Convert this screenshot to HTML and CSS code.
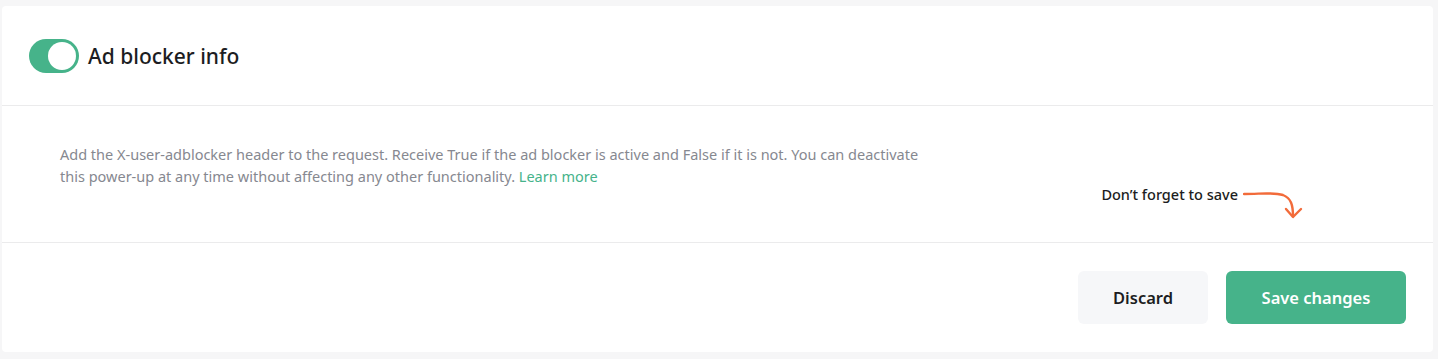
FILE: index.html
```html
<!DOCTYPE html>
<html lang="en">
<head>
<meta charset="utf-8">
<title>Ad blocker info</title>
<link rel="stylesheet" href="styles.css">
</head>
<body>
<div class="card">
  <header class="card-head">
    <span class="toggle" role="switch" aria-checked="true"><span class="knob"></span></span>
    <h2 class="title">Ad blocker info</h2>
  </header>
  <section class="card-body">
    <p class="desc">Add the X-user-adblocker header to the request. Receive True if the ad blocker is active and False if it is not. You can deactivate this power-up at any time without affecting any other functionality. <a class="link" href="#">Learn more</a></p>
    <div class="note">
      <span class="note-text">Don’t forget to save</span>
      <svg class="note-arrow" width="62" height="30" viewBox="0 0 62 30" fill="none" stroke="#f26b3a" stroke-width="2.4" stroke-linecap="round" stroke-linejoin="round">
        <path d="M1 3 C18 3 30 1 40 4 C48 7 50 14 50 25"/>
        <path d="M43 18 L50 26 L58 18"/>
      </svg>
    </div>
  </section>
  <footer class="card-foot">
    <button class="btn btn-ghost" type="button">Discard</button>
    <button class="btn btn-primary" type="button">Save changes</button>
  </footer>
</div>
</body>
</html>
```

FILE: styles.css
```css
html, body {
  margin: 0;
  padding: 0;
}
body {
  background: #f6f6f7;
  font-family: "Noto Sans", "Open Sans", sans-serif;
  color: #1c1d22;
}
.card {
  margin: 6px 5px 7px 2px;
  background: #ffffff;
  border-radius: 4px;
  display: flex;
  flex-direction: column;
}
.card-head {
  height: 100px;
  box-sizing: border-box;
  display: flex;
  align-items: center;
  gap: 9px;
  padding: 1px 0 0 27px;
  border-bottom: 1px solid #ebebec;
}
.toggle {
  width: 50px;
  height: 34px;
  box-sizing: border-box;
  border-radius: 17px;
  background: #46b38a;
  display: flex;
  align-items: center;
  justify-content: flex-end;
  padding: 3px;
}
.knob {
  width: 28px;
  height: 28px;
  border-radius: 50%;
  background: #ffffff;
}
.title {
  margin: 0;
  font-size: 21px;
  font-weight: 500;
  color: #1c1d22;
}
.card-body {
  height: 137px;
  box-sizing: border-box;
  display: flex;
  align-items: flex-end;
  justify-content: space-between;
  padding: 37px 128px 21px 58px;
  border-bottom: 1px solid #ebebec;
}
.desc {
  align-self: flex-start;
  margin: 0;
  width: 880px;
  font-size: 14.5px;
  line-height: 22px;
  color: #868890;
}
.link {
  color: #46b38a;
  text-decoration: none;
}
.note {
  display: flex;
  align-items: flex-start;
  gap: 5px;
}
.note-text {
  font-size: 14.5px;
  font-weight: 500;
  color: #1c1d22;
  line-height: 18px;
}
.note-arrow {
  display: block;
  margin-top: 6px;
}
.card-foot {
  height: 109px;
  box-sizing: border-box;
  display: flex;
  justify-content: flex-end;
  align-items: flex-start;
  gap: 18px;
  padding: 28px 27px 0 0;
}
.btn {
  height: 53px;
  border: none;
  border-radius: 6px;
  font-family: inherit;
  font-size: 16.5px;
  font-weight: 600;
  cursor: pointer;
}
.btn-ghost {
  width: 130px;
  background: #f6f7f9;
  color: #1c1d22;
}
.btn-primary {
  width: 180px;
  background: #46b38a;
  color: #ffffff;
}
```
